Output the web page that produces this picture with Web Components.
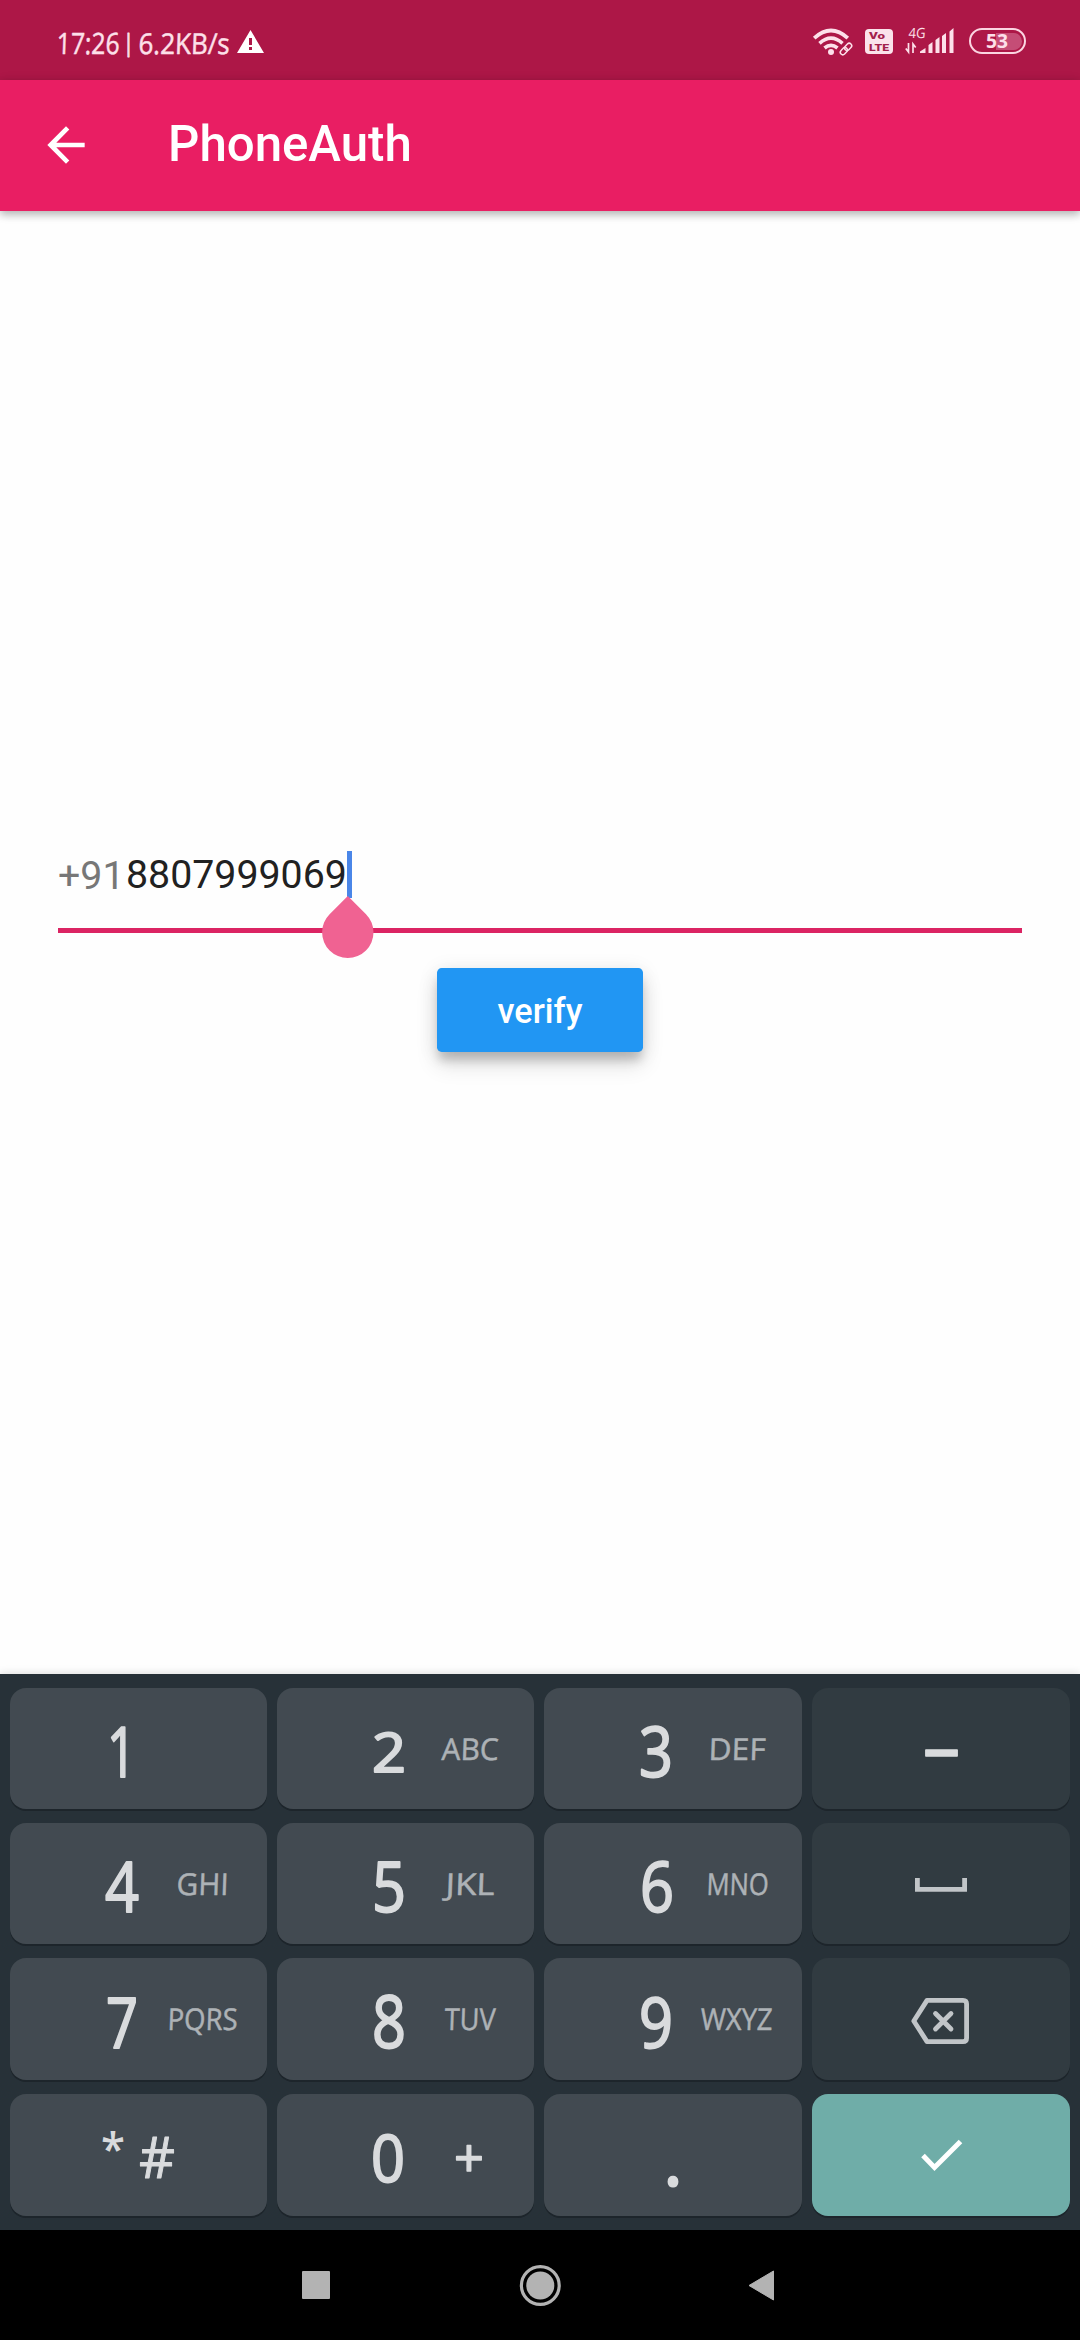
<!DOCTYPE html>
<html lang="en">
<head>
<meta charset="utf-8">
<title>PhoneAuth</title>
<style>
html,body{margin:0;padding:0;background:#fff}
body{width:1080px;height:2340px;overflow:hidden;font-family:Roboto,sans-serif}
</style>
</head>
<body>
<phone-screen></phone-screen>
<script>
const define = (name, html, after) => customElements.define(name, class extends HTMLElement {
  connectedCallback() {
    if (this.shadowRoot) return;
    const root = this.attachShadow({mode: 'open'});
    root.innerHTML = typeof html === 'function' ? html(this) : html;
    if (after) after(this, root);
  }
});

/* A label sized by its ink: w = width, cap = cap height, bold = extra round stroke */
define('hand-text', el => {
  const w = +el.getAttribute('w'), cap = +el.getAttribute('cap');
  const weight = el.getAttribute('weight') || 400;
  const skew = el.getAttribute('skew') || 0;
  const bold = el.getAttribute('bold') || 0;
  return `<style>
    :host{display:block;width:${w}px;height:${cap}px;flex:none}
    svg{display:block;overflow:visible}
    text{font-family:var(--face,"Open Sans"),"Noto Sans",sans-serif;font-weight:${weight};font-size:${cap / 0.714}px;fill:currentColor;stroke:currentColor;stroke-width:${bold};stroke-linejoin:round}
  </style><svg width="${w}" height="${cap}"><text x="0" y="${cap}" textLength="${w}" lengthAdjust="spacingAndGlyphs" transform="skewX(${skew})">${el.getAttribute('label')}</text></svg>`;
});

define('status-bar', `<style>
  :host{display:flex;height:80px;box-sizing:border-box;background:#ad1747;color:#fde0ea;padding:0 54px 0 57px;justify-content:space-between;align-items:flex-start}
  .l,.r{display:flex;align-items:flex-start}
  svg{display:block;overflow:visible}
  .volte{--face:Roboto;box-sizing:border-box;width:28px;height:25px;border-radius:4px;background:#fbe3eb;color:#a3214c;margin:29px 0 0 12px;padding:3px 0 0 4px;display:flex;flex-direction:column;gap:5px}
  .net{width:50px;margin:28px 0 0 12px}
  .net hand-text{margin-left:4px}
  .bat{margin:28px 0 0 14px;box-sizing:border-box;width:57.500px;height:26px;border:2px solid #fbd5e1;border-radius:13px;padding:2.500px;display:flex}
  .fill{flex:1;border-radius:9px;background:linear-gradient(90deg,transparent 46%,#c54d76 46%);display:flex;justify-content:center;align-items:center}
</style>
<div class="l"><hand-text style="margin-top:33px" label="17:26" w="63" cap="21" skew="-2" bold=".5"></hand-text>
<hand-text style="margin:34px 0 0 3px" label="|" w="11" cap="17" bold=".8"></hand-text>
<hand-text style="margin:33px 0 0 5px" label="6.2KB/s" w="91" cap="20.500" skew="-2" bold=".5"></hand-text>
<svg style="margin:30px 0 0 7px" width="27" height="23" viewBox="0 0 27 23"><path fill="#fff" fill-rule="evenodd" d="M13.500 0 27 23H0ZM12 8v7h3V8Zm0 9v3h3v-3Z"/></svg></div>
<div class="r">
<svg style="margin-top:29px" width="40" height="26" viewBox="0 0 40 26"><g fill="none" stroke="#fde0ea"><path stroke-width="3.800" d="M1.200 9.200Q18-6 34.800 9.200"/><path stroke-width="3.600" d="M6.500 14.300Q18 4 29.500 14.300M11.500 19Q18 13.600 24.500 19"/><g stroke-width="1.500" transform="rotate(-45 33 20)"><rect x="26" y="17.500" width="8" height="5" rx="2.500"/><rect x="32" y="17.500" width="8" height="5" rx="2.500"/></g></g><circle cx="18" cy="23" r="3" fill="#fde0ea"/></svg>
<div class="volte"><hand-text label="Vo" w="16" cap="7" weight="900"></hand-text><hand-text label="LTE" w="20" cap="7" weight="900"></hand-text></div>
<div class="net"><hand-text label="4G" w="17" cap="10" skew="-4"></hand-text>
<svg style="margin-top:-10px" width="50" height="25" viewBox="0 0 50 25"><path fill="none" stroke="#fde0ea" stroke-width="1.700" d="M3.500 15v9L.800 20.500M8 25v-9l2.700 3.500"/><g fill="#fde0ea"><path d="M15 25v-1.500L20.500 20v5ZM23.500 25v-8l4-3v11ZM30.500 25V12l4-3v16ZM37 25V8l4-3v20ZM44.500 25V3.500l4-3.500v25Z"/></g></svg></div>
<div class="bat"><div class="fill"><hand-text label="53" w="22" cap="14" weight="700"></hand-text></div></div>
</div>`);

define('app-bar', `<style>
  :host{display:flex;height:130.600px;background:#e91e63;color:#fff;align-items:center;position:relative;box-shadow:0 4px 8px rgba(0,0,0,.22),0 1px 10px rgba(0,0,0,.12)}
  svg{margin-left:38px}
  .t{font:500 49.200px/60px Roboto;margin:-2px 0 0 74px;white-space:nowrap}
</style>
<svg width="56" height="56" viewBox="0 0 24 24"><path fill="#fff" d="M20 11H7.830l5.590-5.590L12 4l-8 8 8 8 1.410-1.410L7.830 13H20z"/></svg><span class="t"><slot></slot></span>`);

define('phone-field', `<style>
  :host{display:flex;align-items:flex-start;box-sizing:border-box;width:964px;height:81.700px;border-bottom:5px solid #db2463;font:400 39.300px/46px Roboto;color:#212121;position:relative}
  .p{color:#777;width:68px;margin-top:2px}
  .v{margin-top:1px}
  .c{width:4.700px;height:47px;background:#4a86e8}
  .h{position:absolute;left:263.500px;top:45.500px}
</style>
<span class="p">+91</span><span class="v"><slot></slot></span><i class="c"></i>
<svg class="h" width="52" height="63" viewBox="0 0 52 63"><path fill="#f06292" d="M25.800 0 44 18.200A25.700 25.700 0 1 1 7.600 18.200Z"/></svg>`);

define('raised-button', `<style>
  :host{display:flex;box-sizing:border-box;width:206px;height:84px;padding-top:1px;border-radius:4.700px;background:#2196f3;color:#fff;align-items:center;justify-content:center;font:500 34.300px/40px Roboto;box-shadow:0 10px 10px -2px rgba(0,0,0,.16),0 13px 22px rgba(0,0,0,.12),0 3px 20px rgba(0,0,0,.1)}
</style><slot></slot>`);

define('pad-key', `<style>
  :host{display:flex;align-items:flex-start;border-radius:16px;background:#424a51;color:#d9dbdd;box-shadow:0 2px 0 #1d252b;min-width:0}
  :host([dark]){background:#313b41}
  :host([go]){background:#6fada8}
  .d,.s{display:flex;justify-content:center}
  .d{margin-left:71px;width:81px}
  .s{width:82px;color:#adb2b6}
</style><slot></slot><div class="d"></div><div class="s"></div>`, (el, root) => {
  const d = el.getAttribute('digit');
  if (!d) { root.querySelector('.d').remove(); root.querySelector('.s').remove(); return; }
  const [w, top, cap] = el.getAttribute('box').split(' ');
  root.querySelector('.d').innerHTML = `<hand-text style="margin-top:${top}px" label="${d}" w="${w}" cap="${cap}" weight="500" bold="2"></hand-text>`;
  const s = el.getAttribute('sub');
  if (s) root.querySelector('.s').innerHTML = `<hand-text style="margin-top:50.500px" label="${s}" w="${el.getAttribute('sw')}" cap="21.500" skew="-2" bold=".5"></hand-text>`;
});

define('key-pad', `<style>
  :host{display:grid;height:556px;box-sizing:border-box;padding:14px 10px;grid-template-columns:257px 257px 258px 258px;grid-template-rows:121px 121px 122px 122px;gap:14px 10px;background:#273138;box-shadow:0 -1px 8px rgba(0,0,0,.12);position:relative}
  svg{display:block}
</style>
<pad-key digit="1" box="29 39 50"></pad-key>
<pad-key digit="2" box="34 45 38.500" sub="ABC" sw="57"></pad-key>
<pad-key digit="3" box="34 39 50" sub="DEF" sw="57"></pad-key>
<pad-key dark><hand-text label="–" w="37" cap="46" weight="600" bold="1.500" style="margin:37px 0 0 111px"></hand-text></pad-key>
<pad-key digit="4" box="34 39 50" sub="GHI" sw="52"></pad-key>
<pad-key digit="5" box="34 40 49" sub="JKL" sw="49"></pad-key>
<pad-key digit="6" box="34 39 50" sub="MNO" sw="62" style="padding-left:1px"></pad-key>
<pad-key dark><svg width="258" height="121"><path d="M105.400 55V66.400H152.600V55" fill="none" stroke="#c1c5c8" stroke-width="4.800"/></svg></pad-key>
<pad-key digit="7" box="32 41 49" sub="PQRS" sw="70"></pad-key>
<pad-key digit="8" box="34 38 52" sub="TUV" sw="51"></pad-key>
<pad-key digit="9" box="34 40 50" sub="WXYZ" sw="72"></pad-key>
<pad-key dark><svg width="258" height="122"><path d="M115 42.400H151Q154.600 42.400 154.600 46V80Q154.600 83.600 151 83.600H115L101.800 63Z" fill="none" stroke="#c1c5c8" stroke-width="4.800" stroke-linejoin="round"/><path d="M123.500 55.500l15.500 15.500M139 55.500l-15.500 15.500" stroke="#c1c5c8" stroke-width="4.800" stroke-linecap="round"/></svg></pad-key>
<pad-key><hand-text label="*" w="24" cap="32" weight="600" style="margin:39px 0 0 91px"></hand-text><hand-text label="#" w="36" cap="40" weight="500" bold="1" style="margin:44px 0 0 14px"></hand-text></pad-key>
<pad-key><hand-text label="0" w="34" cap="47" weight="500" bold="2" style="margin:41px 0 0 94px"></hand-text><hand-text label="+" w="30" cap="38" weight="500" bold="1.500" style="margin:45px 0 0 49px"></hand-text></pad-key>
<pad-key><hand-text label="." w="18" cap="50" weight="700" style="margin:43px 0 0 120px"></hand-text></pad-key>
<pad-key go><svg width="258" height="122"><path d="M111 61.500l11.500 12L148.500 47.500" fill="none" stroke="#fff" stroke-width="5"/></svg></pad-key>`);

define('nav-bar', `<style>
  :host{display:flex;height:110px;background:#000}
  svg{display:block}
</style>
<svg width="1080" height="110"><g fill="#b3b3b3"><rect x="302" y="41" width="28" height="28" rx="1"/><circle cx="540.300" cy="55.500" r="14"/><circle cx="540.300" cy="55.500" r="18.900" fill="none" stroke="#b3b3b3" stroke-width="3.200"/><path d="M749 55.500 773.500 41V70Z" stroke="#b3b3b3" stroke-width="1" stroke-linejoin="round"/></g></svg>`);

define('phone-screen', `<style>
  :host{display:flex;flex-direction:column;width:1080px;height:2340px;background:#fefefe}
  main{height:1463.400px;flex:none;display:flex;flex-direction:column;align-items:center}
  phone-field{margin-top:640.400px}
  raised-button{margin-top:35.500px}
</style>
<status-bar></status-bar><app-bar>PhoneAuth</app-bar>
<main><phone-field>8807999069</phone-field><raised-button>verify</raised-button></main>
<key-pad></key-pad><nav-bar></nav-bar>`);
</script>
</body>
</html>
